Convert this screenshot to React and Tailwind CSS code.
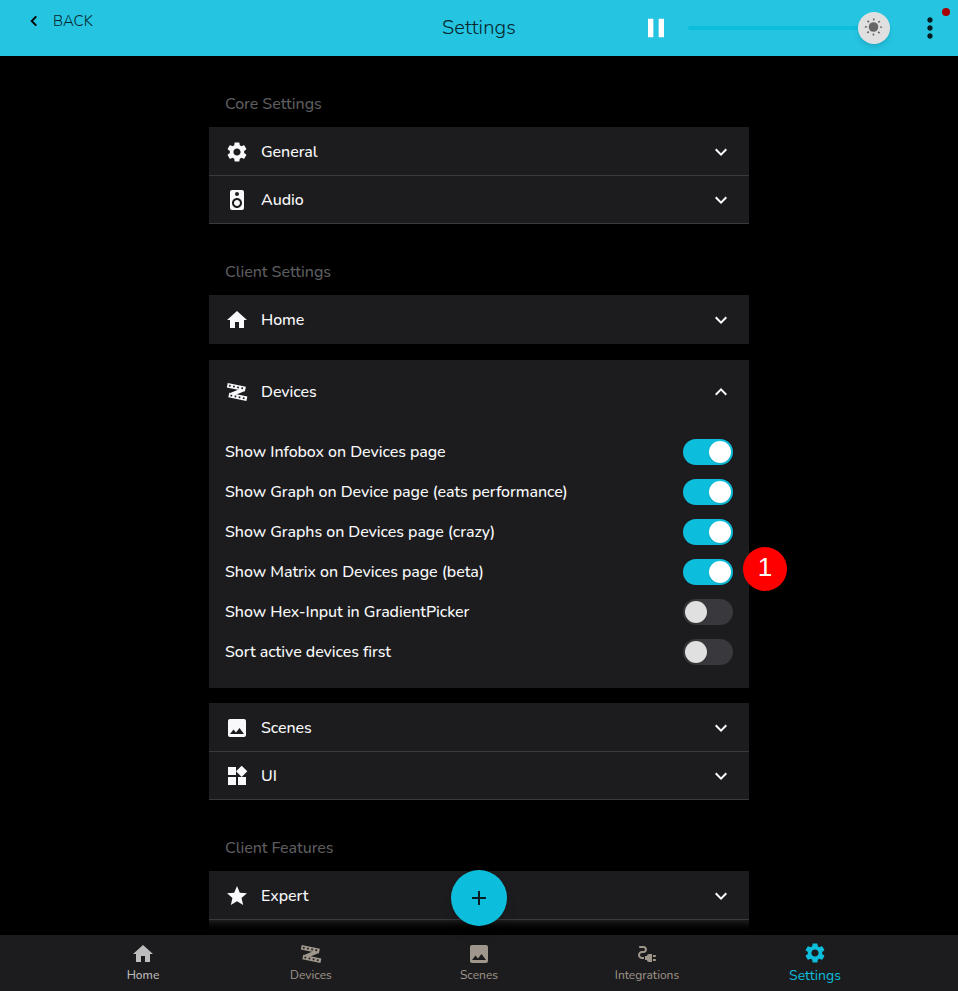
import React from "react";
import {
  MdSettings, MdSpeaker, MdHome, MdImage, MdWidgets, MdStar, MdExpandMore, MdExpandLess,
  MdElectricalServices, MdPause, MdMoreVert, MdAdd,
} from "react-icons/md";

function LedStrip({ size = 24, className = "" }) {
  return (
    <svg width={size} height={size} viewBox="0 0 24 24" className={className} fill="none" stroke="currentColor">
      <path d="M2.3 5.2 L20.4 8.9" strokeWidth="4.6" />
      <path d="M3.8 15.1 L21.9 18.8" strokeWidth="4.6" />
      <path d="M15 9 L20 11 L9.5 15.2 L4.5 13.2 Z" fill="currentColor" stroke="none" />
      <path d="M4 5.55 L19.5 8.72" stroke="#1c1c1e" strokeWidth="1.7" strokeDasharray="1.7 2.5" />
      <path d="M5.5 15.45 L21 18.62" stroke="#1c1c1e" strokeWidth="1.7" strokeDasharray="1.7 2.5" />
    </svg>
  );
}

function Row({ icon: Icon, label, border = true }) {
  return (
    <div className={`flex h-12 items-center bg-[#1c1c1e] px-4 ${border ? "border-b border-[#3a3a3c]" : ""}`}>
      <Icon size={24} className="text-[#f9f9fb]" />
      <span className="ml-3 text-base leading-6">{label}</span>
      <MdExpandMore size={24} className="ml-auto" />
    </div>
  );
}

function Toggle({ on }) {
  return (
    <div className={`flex h-[26px] w-[50px] items-center rounded-full px-[2px] ${on ? "justify-end bg-[#0dbedc]" : "bg-[#39393d]"}`}>
      <div className={`size-[22px] rounded-full shadow ${on ? "bg-white" : "bg-[#e0e0e0]"}`} />
    </div>
  );
}

const options = [
  ["Show Infobox on Devices page", true],
  ["Show Graph on Device page (eats performance)", true],
  ["Show Graphs on Devices page (crazy)", true],
  ["Show Matrix on Devices page (beta)", true],
  ["Show Hex-Input in GradientPicker", false],
  ["Sort active devices first", false],
];

function Heading({ children }) {
  return <h2 className="h-12 px-4 text-base leading-[48px] text-[#5c5c5f]">{children}</h2>;
}

function Tab({ icon: Icon, label, color, active = false }) {
  return (
    <div className={`flex h-14 w-[168px] flex-col items-center ${active ? "pt-[6px]" : "pt-[7px]"} ${color}`}>
      <Icon size={24} className="shrink-0" />
      <span className={active ? "mt-px text-sm leading-5" : "text-xs leading-[18px]"}>{label}</span>
    </div>
  );
}

export default function App() {
  return (
    <div className="relative flex h-[991px] w-[958px] flex-col overflow-hidden bg-black font-['Nunito','Lato',sans-serif] text-[#f9f9fb]">
      <header className="relative flex h-14 shrink-0 items-center justify-between bg-[#25c4e1] text-[#06262c]">
        <div className="flex h-full w-[200px] items-start pt-[11px] pl-6">
          <svg width="20" height="20" viewBox="0 0 20 20" fill="none" className="stroke-black" strokeWidth="1.9">
            <path d="M12.3 5.4 L7.7 10 L12.3 14.6" />
          </svg>
          <span className="ml-[9px] text-[15px] leading-5 font-light">BACK</span>
        </div>
        <h1 className="absolute left-[442px] text-xl leading-8 font-light tracking-[0.15px]">Settings</h1>
        <div className="flex items-center">
          <MdPause size={32} className="text-white" />
          <div className="ml-4 flex w-[202px] items-center">
            <div className="h-1 w-[170px] rounded-full bg-[#0dbedc]" />
            <div className="flex size-8 items-center justify-center rounded-full bg-[#e0e0e0] shadow-md">
              <svg width="20" height="20" viewBox="0 0 20 20" fill="none" stroke="#666">
                <circle cx="9.5" cy="9" r="4.8" fill="#666" stroke="none" />
                <circle cx="9.5" cy="9" r="7.6" strokeWidth="2" strokeDasharray="1.6 4.369" strokeDashoffset="0.8" />
              </svg>
            </div>
          </div>
          <MdMoreVert size={32} className="mr-3 ml-6 text-[#041b20]" />
        </div>
        <span className="absolute top-2 right-2 size-2 rounded-full bg-[#a80000]" />
      </header>

      <main className="mx-auto w-[540px] flex-1 overflow-hidden pt-6 font-medium tracking-[-0.06px]">
        <Heading>Core Settings</Heading>
        <div className="-mt-px border-t border-[#1c1c1e]">
          <Row icon={MdSettings} label="General" />
          <Row icon={MdSpeaker} label="Audio" />
        </div>
        <div className="h-6" />
        <Heading>Client Settings</Heading>
        <div className="-mt-px border-t border-[#1c1c1e]">
          <Row icon={MdHome} label="Home" border={false} />
        </div>
        <section className="mt-4 h-[328px] bg-[#1c1c1e] px-4">
          <div className="flex h-16 items-center">
            <LedStrip />
            <span className="ml-3 text-base">Devices</span>
            <MdExpandLess size={24} className="ml-auto" />
          </div>
          <div className="pt-2">
            {options.map(([label, on]) => (
              <div key={label} className="flex h-10 items-center justify-between">
                <span className="text-base">{label}</span>
                <Toggle on={on} />
              </div>
            ))}
          </div>
        </section>
        <div className="mt-[15px] border-t border-[#1c1c1e]">
          <Row icon={MdImage} label="Scenes" />
          <Row icon={MdWidgets} label="UI" />
        </div>
        <div className="h-6" />
        <Heading>Client Features</Heading>
        <div className="-mt-px border-t border-[#1c1c1e]">
          <Row icon={MdStar} label="Expert" />
          <div className="h-[14px] bg-linear-to-b from-[#1c1c1e] to-black" />
        </div>
      </main>

      <footer className="flex h-14 shrink-0 justify-center bg-[#1c1c1e]">
        <Tab icon={MdHome} label="Home" color="text-[#bdbdbd] font-medium" />
        <Tab icon={LedStrip} label="Devices" color="text-[#a0978c]" />
        <Tab icon={MdImage} label="Scenes" color="text-[#a0978c]" />
        <Tab icon={MdElectricalServices} label="Integrations" color="text-[#a0978c]" />
        <Tab icon={MdSettings} label="Settings" color="text-[#0dbedc]" active />
      </footer>

      <div className="absolute top-[547px] left-[743px] flex size-11 justify-center rounded-full bg-[#ff0000] font-['Liberation_Sans',Arial,sans-serif] text-[26px] leading-[41px] text-white">1</div>
      <div className="absolute top-[870px] left-[451px] flex size-14 items-center justify-center rounded-full bg-[#0dbedc] text-[#041b20] shadow-lg">
        <MdAdd size={24} />
      </div>
    </div>
  );
}
